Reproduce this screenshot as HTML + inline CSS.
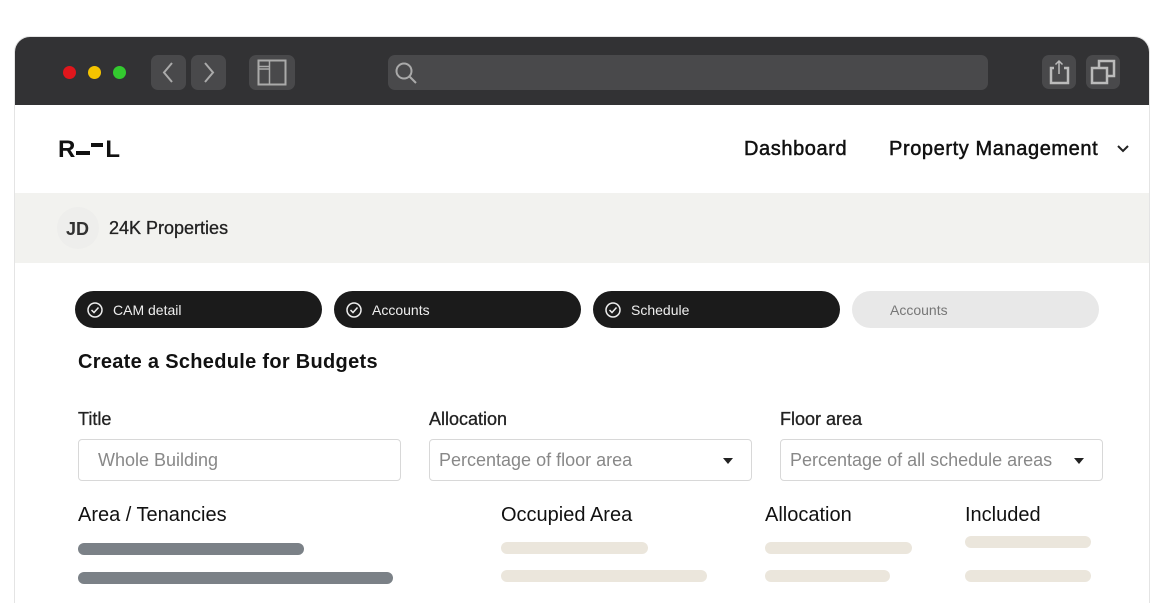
<!DOCTYPE html>
<html><head><style>
*{margin:0;padding:0;box-sizing:border-box}
html,body{width:1168px;height:603px;overflow:hidden}
body{background:#fff;position:relative;font-family:"Liberation Sans",sans-serif;color:#111}
.a{position:absolute}
.frame{left:14px;top:36px;width:1136px;height:580px;border-radius:16px 16px 0 0;background:#fff;border:1px solid #e4e4e4;overflow:hidden}
.bar{left:0;top:0;width:100%;height:68px;background:#323234}
.btn{background:#49494b;border-radius:7px}
.dot{width:13px;height:13px;border-radius:50%}
.pill{height:37px;width:247px;border-radius:19px;background:#1b1b1b;color:#eee;font-size:14px;display:flex;align-items:center;padding-left:38px}
.pill svg{position:absolute;left:11px;top:10px}
.lbl{font-size:18px;color:#222;-webkit-text-stroke:0.3px #222}
.inp{height:42px;border:1px solid #d8d8d8;border-radius:4px;font-size:18px;color:#888;padding:10px 0 0 9px;width:323px}
.tri{position:absolute;right:18px;top:18px;width:0;height:0;border-left:5px solid transparent;border-right:5px solid transparent;border-top:6px solid #222}
.g{background:#7b8187;border-radius:6px;height:12px}
.b{background:#ebe6dc;border-radius:6px;height:12px}
.nav{font-size:20px;-webkit-text-stroke:0.5px #111;letter-spacing:0.6px}
</style></head><body>
<div class="a frame">
<div class="a bar">
 <div class="a dot" style="left:48px;top:29px;background:#e0161c"></div>
 <div class="a dot" style="left:73px;top:29px;background:#f5c400"></div>
 <div class="a dot" style="left:98px;top:29px;background:#33c92f"></div>
 <div class="a btn" style="left:136px;top:18px;width:35px;height:35px"><svg width="35" height="35"><path d="M21 8 L13 17.5 L21 27" stroke="#aaa" stroke-width="2" fill="none"/></svg></div>
 <div class="a btn" style="left:176px;top:18px;width:35px;height:35px"><svg width="35" height="35"><path d="M14 8 L22 17.5 L14 27" stroke="#aaa" stroke-width="2" fill="none"/></svg></div>
 <div class="a btn" style="left:234px;top:18px;width:46px;height:35px"><svg width="46" height="35"><rect x="9.5" y="5.5" width="27" height="24" stroke="#aaa" stroke-width="2" fill="none"/><path d="M20.5 5.5V29.5M9.5 11.5H20.5M9.5 14H20.5" stroke="#aaa" stroke-width="1.5"/></svg></div>
 <div class="a btn" style="left:373px;top:18px;width:600px;height:35px"><svg width="35" height="35"><circle cx="16" cy="16" r="7.5" stroke="#aaa" stroke-width="2" fill="none"/><path d="M21.5 21.5L28 28" stroke="#aaa" stroke-width="2"/></svg></div>
 <div class="a btn" style="left:1027px;top:18px;width:34px;height:34px"><svg width="34" height="34"><path d="M12 13H9V28H26V13H22" stroke="#bbb" stroke-width="2.5" fill="none"/><path d="M17 6V19M13.5 9.5L17 6L20.5 9.5" stroke="#bbb" stroke-width="1.5" fill="none"/></svg></div>
 <div class="a btn" style="left:1071px;top:18px;width:34px;height:34px"><svg width="34" height="34"><rect x="13" y="6" width="15" height="15" stroke="#bbb" stroke-width="2.5" fill="none"/><rect x="6" y="13" width="15" height="15" stroke="#bbb" stroke-width="2.5" fill="#49494b"/></svg></div>
</div>
</div>
<div class="a" style="left:58px;top:136px;font-size:24px;font-weight:bold;letter-spacing:-1px">R<span style="display:inline-block;width:14px;height:4px;background:#111;margin:0 1px 2px 2px"></span><span style="display:inline-block;width:12px;height:4px;background:#111;margin:0 2px 12px 0;vertical-align:middle"></span>L</div>
<div class="a nav" style="left:744px;top:138px">Dashboard</div>
<div class="a nav" style="left:889px;top:138px">Property Management</div>
<svg class="a" style="left:1116px;top:143px" width="14" height="12"><path d="M2 3L7 8L12 3" stroke="#222" stroke-width="2" fill="none"/></svg>
<div class="a" style="left:15px;top:193px;width:1134px;height:70px;background:#f2f2ef"></div>
<div class="a" style="left:57px;top:207px;width:42px;height:42px;border-radius:50%;background:#eeeeec"></div>
<div class="a" style="left:66px;top:219px;font-size:18px;font-weight:bold;color:#333">JD</div>
<div class="a" style="left:109px;top:218px;font-size:18px;color:#222;-webkit-text-stroke:0.3px #222">24K Properties</div>
<div class="a pill" style="left:75px;top:291px"><svg width="18" height="18"><circle cx="9" cy="9" r="7" stroke="#eee" stroke-width="1.5" fill="none"/><path d="M5.5 9L8 11.5L12.5 6.5" stroke="#eee" stroke-width="1.5" fill="none"/></svg>CAM detail</div>
<div class="a pill" style="left:334px;top:291px"><svg width="18" height="18"><circle cx="9" cy="9" r="7" stroke="#eee" stroke-width="1.5" fill="none"/><path d="M5.5 9L8 11.5L12.5 6.5" stroke="#eee" stroke-width="1.5" fill="none"/></svg>Accounts</div>
<div class="a pill" style="left:593px;top:291px"><svg width="18" height="18"><circle cx="9" cy="9" r="7" stroke="#eee" stroke-width="1.5" fill="none"/><path d="M5.5 9L8 11.5L12.5 6.5" stroke="#eee" stroke-width="1.5" fill="none"/></svg>Schedule</div>
<div class="a pill" style="left:852px;top:291px;background:#e8e8e8;color:#777">Accounts</div>
<div class="a" style="left:78px;top:351px;font-size:20px;font-weight:bold;letter-spacing:0.3px">Create a Schedule for Budgets</div>
<div class="a lbl" style="left:78px;top:409px">Title</div>
<div class="a lbl" style="left:429px;top:409px">Allocation</div>
<div class="a lbl" style="left:780px;top:409px">Floor area</div>
<div class="a inp" style="left:78px;top:439px;padding-left:19px">Whole Building</div>
<div class="a inp" style="left:429px;top:439px">Percentage of floor area<div class="tri"></div></div>
<div class="a inp" style="left:780px;top:439px">Percentage of all schedule areas<div class="tri" style="right:18px"></div></div>
<div class="a" style="left:78px;top:504px;font-size:20px">Area / Tenancies</div>
<div class="a" style="left:501px;top:504px;font-size:20px">Occupied Area</div>
<div class="a" style="left:765px;top:504px;font-size:20px">Allocation</div>
<div class="a" style="left:965px;top:504px;font-size:20px">Included</div>
<div class="a g" style="left:78px;top:543px;width:226px"></div>
<div class="a g" style="left:78px;top:572px;width:315px"></div>
<div class="a b" style="left:501px;top:542px;width:147px"></div>
<div class="a b" style="left:501px;top:570px;width:206px"></div>
<div class="a b" style="left:765px;top:542px;width:147px"></div>
<div class="a b" style="left:765px;top:570px;width:125px"></div>
<div class="a b" style="left:965px;top:536px;width:126px"></div>
<div class="a b" style="left:965px;top:570px;width:126px"></div>
</body></html>
